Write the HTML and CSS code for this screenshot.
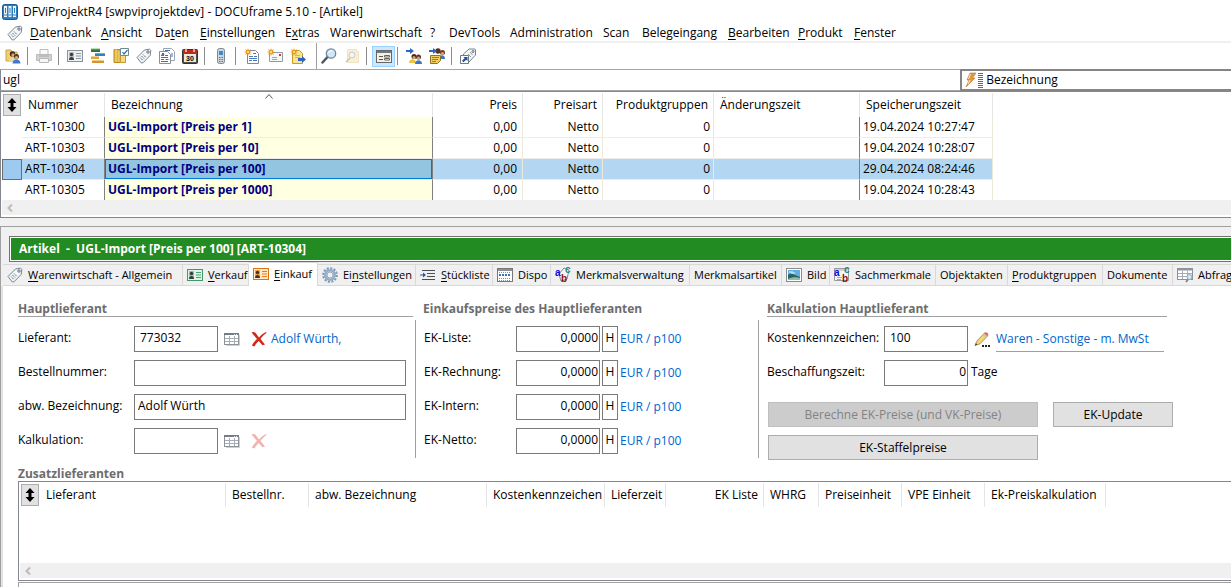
FILE: index.html
```html
<!DOCTYPE html>
<html lang="de">
<head>
    <meta charset="UTF-8">
    <meta name="viewport" content="width=device-width, initial-scale=1.0">
    <title>DFViProjektR4 [swpviprojektdev] - DOCUframe 5.10 - [Artikel]</title>
    <link rel="stylesheet" href="styles.css">
</head>
<body>
    <!-- Icons -->
    <svg class="sprite" width="0" height="0" aria-hidden="true">
        <symbol id="i-app" viewBox="0 0 16 16">
            <rect x=".5" y=".5" width="15" height="15" rx="2" fill="#2f7fc0" stroke="#1a5c97"/>
            <path d="M2 2h3v11H2zM6.500 2h3v11h-3zM11 2h3v11h-3z" fill="#eaf5fd"/>
            <path d="M3 4h1v5H3zM7.500 4h1v5h-1zM12 4h1v5h-1z" fill="#2f7fc0"/>
            <path d="M2 11h3M6.500 11h3M11 11h3" stroke="#2f7fc0"/>
        </symbol>
        <symbol id="i-tag" viewBox="0 0 16 16">
            <path d="M1 9.500 8.500 2l5-.8 1.300 1.200-.6 5L7 14.800 5.300 15z" fill="#f3f6f8" stroke="#738491" stroke-linejoin="round"/>
            <circle cx="12" cy="4" r="1.200" fill="#fff" stroke="#667"/>
            <path d="m4 9.500 3 3M5.500 8l3 3M7 6.500l3 3" stroke="#596873" stroke-dasharray="1.500 .7"/>
        </symbol>
        <symbol id="i-users" viewBox="0 0 16 16">
            <path d="M1 2h5l1 2h5v9H1z" fill="#efcf72" stroke="#cda23c"/>
            <circle cx="7.500" cy="6" r="2.700" fill="#3d2a1c"/><circle cx="8" cy="7" r="1.700" fill="#dda373"/>
            <path d="M4 13c0-5 7-5 7 0z" fill="#e7d7a3"/>
            <circle cx="11.500" cy="8.500" r="2.500" fill="#5b3420"/><circle cx="11.500" cy="9.500" r="1.600" fill="#e4ac80"/>
            <path d="M7.500 15.500c0-5.500 8-5.500 8 0z" fill="#3e79c9"/>
        </symbol>
        <symbol id="i-print" viewBox="0 0 16 16">
            <path d="M4 6V1.500h8V6" fill="#fafafa" stroke="#bdbdbd"/>
            <path d="M.5 6.500h15v6H.5z" fill="#d2d2d2" stroke="#bcbcbc"/>
            <path d="M3.500 10.500h9v4h-9z" fill="#f7f7f7" stroke="#b8b8b8"/><path d="M3 8h10" stroke="#a8a8a8"/>
        </symbol>
        <symbol id="i-card" viewBox="0 0 16 16">
            <rect x=".5" y="2.500" width="15" height="11" fill="#eef1f3" stroke="#87929b"/>
            <rect x="2" y="4" width="5" height="8" fill="#b9c0c5"/>
            <circle cx="4.500" cy="6.500" r="1.700" fill="#3c3c3c"/><path d="M2 12c0-4 5-4 5 0z" fill="#3c3c3c"/>
            <path d="M9 5.500h5M9 8h5M9 10.500h5" stroke="#8c969e"/>
        </symbol>
        <symbol id="i-bars" viewBox="0 0 16 16">
            <path d="M1 1h9v3H1z" fill="#35753b"/><path d="M5 5.500h10v2.500H5z" fill="#397fc6"/>
            <path d="M1 8.500h8V11H1z" fill="#e0a734"/><path d="M2 12.500h12V15H2z" fill="#d6942e"/>
            <path d="M1 1h9M5 5.500h10" stroke="#7fb873"/>
        </symbol>
        <symbol id="i-door" viewBox="0 0 16 16">
            <path d="M1 1.500h6v13H1z" fill="#e1b43c" stroke="#b88c20"/><path d="M3 1v13M6 3v11" stroke="#f7dc86"/>
            <path d="M7.500 6h5v8.500h-5z" fill="#f5da83" stroke="#c6982b"/>
            <path d="M7.500.5h8v7h-8z" fill="#fff" stroke="#72879a"/><path d="m9.500 4 1.500 2L14.500 2" fill="none" stroke="#28799b" stroke-width="1.200"/>
        </symbol>
        <symbol id="i-docs" viewBox="0 0 16 16">
            <path d="M4.500.5h8l3 3v9h-11z" fill="#fff" stroke="#9aa3ad"/>
            <path d="M.5 3.500h8l3 3v9H.5z" fill="#fff" stroke="#8791a0"/>
            <path d="M2 7.500h3M6 7.500h3M2 9.500h7M2 11.500h3M6.500 11.500h3M2 13.500h7M6 2.500h5M12 6h2M12 8h2" stroke="#4470b4"/>
            <path d="m3 7 1-2 1 2" fill="none" stroke="#263d82"/>
        </symbol>
        <symbol id="i-phone" viewBox="0 0 16 16">
            <rect x="4.500" y=".5" width="7" height="15" rx="2" fill="#cdd6de" stroke="#7d8b98"/>
            <path d="M6 3h4v4H6z" fill="#3f8ac9"/><path d="M6 9.500h4M6 11.500h4M6 13.500h4" stroke="#687681" stroke-dasharray="1 .5"/>
        </symbol>
        <symbol id="i-star" viewBox="0 0 8 8">
            <path d="m4 0 .8 2.200L7 1 5.800 3.200 8 4l-2.200.8L7 7l-2.200-1.200L4 8l-.8-2.200L1 7l1.200-2.200L0 4l2.200-.8L1 1l2.200 1.200z" fill="#e99a18"/>
            <circle cx="4" cy="4" r="1" fill="#fff0a0"/>
        </symbol>
        <symbol id="i-newdoc" viewBox="0 0 16 16">
            <path d="M3.500 2.500h8l3 3v10h-11z" fill="#fff" stroke="#7f8a96"/>
            <path d="M9 5.500h3M5 8.500h4M10 8.500h3M5 10.500h8M5 12.500h3M9 12.500h4" stroke="#4a78bb"/>
            <use href="#i-star" width="8" height="8"/>
        </symbol>
        <symbol id="i-newmail" viewBox="0 0 16 16">
            <path d="M2.500 4.500h13v9h-13z" fill="#f5f6f7" stroke="#919ba3"/>
            <path d="M12 6h2v2h-2z" fill="#ce3c2c"/><path d="M5 9.500h5M5 11.500h5" stroke="#9aa"/>
            <use href="#i-star" width="8" height="8"/>
        </symbol>
        <symbol id="i-newout" viewBox="0 0 16 16">
            <path d="M2.500 2.500h7l3 3v10h-10z" fill="#f9e58c" stroke="#c79b2b"/>
            <path d="M5 7.500h5M5 9.500h5" stroke="#d8b64d"/>
            <path d="M8 10h4V8l4 3.500-4 3.500v-2H8z" fill="#2b64c4"/>
            <use href="#i-star" width="8" height="8"/>
        </symbol>
        <symbol id="i-mag" viewBox="0 0 16 16">
            <path d="m1.500 14.500 5-5.500" stroke="#4d545b" stroke-width="2.500" stroke-linecap="round"/>
            <circle cx="10" cy="5.500" r="4.700" fill="#cfe7f8" stroke="#6e879c" stroke-width="1.300"/>
            <path d="M7.500 5C8 3 10 2.500 11.500 3" stroke="#fff" fill="none"/>
        </symbol>
        <symbol id="i-magdoc" viewBox="0 0 16 16">
            <g opacity=".45">
                <path d="M3.500 1.500h9v2h2v11h-11z" fill="#f6df9b" stroke="#dcc080"/>
                <path d="m2 14 4-4" stroke="#777" stroke-width="1.500"/><circle cx="8" cy="7" r="3" fill="#e5edf3" stroke="#888"/>
            </g>
        </symbol>
        <symbol id="i-form" viewBox="0 0 16 16">
            <rect x=".5" y="2.500" width="15" height="12" fill="#f4f1e4" stroke="#65676b"/>
            <path d="M1 4h14" stroke="#74777b" stroke-width="2"/>
            <path d="M3 8.500h4M3 11.500h4" stroke="#555"/><path d="M8.500 7.500h5v1.500h-5zM8.500 10.500h5V12h-5z" fill="#fff" stroke="#666"/>
        </symbol>
        <symbol id="i-arrusers" viewBox="0 0 16 16">
            <path d="M0 2h4V0l4 3-4 3V4H0z" fill="#2b67c5"/>
            <circle cx="8" cy="8.500" r="2.500" fill="#47291a"/><circle cx="8" cy="9.500" r="1.500" fill="#dca27a"/>
            <path d="M3 15c0-5 7-5 7 0z" fill="#edc43f"/>
            <circle cx="12.500" cy="9" r="2.500" fill="#603523"/><circle cx="12.500" cy="10" r="1.500" fill="#dda27a"/>
            <path d="M9 16c0-5 7-5 7 0z" fill="#3c75c6"/>
        </symbol>
        <symbol id="i-arrnote" viewBox="0 0 16 16">
            <circle cx="9" cy="3" r="2.700" fill="#5b321e"/><circle cx="13.500" cy="4.500" r="2.500" fill="#6b3d23"/>
            <circle cx="13.500" cy="5.500" r="1.500" fill="#dfa57d"/><path d="M10.500 11c0-5 5.500-5 5.500 0z" fill="#3c75c6"/>
            <path d="M0 2h4V0l4 3-4 3V4H0z" fill="#2b67c5"/>
            <path d="M1.500 7.500h10v5l-3 3h-7z" fill="#f0cf61" stroke="#8f7427"/><path d="M3 9.500h7M3 11.500h6M3 13.500h4" stroke="#9a8132"/>
        </symbol>
        <symbol id="i-taglink" viewBox="0 0 16 16">
            <path d="m3.500 6 5.500-5h6l.5.500v5.500L9 14 3.500 8.500z" fill="#f4f7f9" stroke="#738491"/>
            <circle cx="13" cy="3.500" r="1" fill="#fff" stroke="#667"/><path d="m8 6 3 3M10 4l2.500 3" stroke="#8b98a2"/>
            <path d="M.5 7.500h8v8h-8z" fill="#fff" stroke="#777"/>
            <path d="M3.500 9h4v4L6.200 11.700 3.500 14.300 2 12.800 4.700 10.200z" fill="#17539e"/>
        </symbol>
        <symbol id="i-flash" viewBox="0 0 18 16">
            <path d="M5 1h6L7.500 6H10L1 15l3-7H2z" fill="#e59637" stroke="#b9763f" stroke-width=".6"/>
            <path d="m5.500 2-2 5M5 8l-2 4" stroke="#fff0be"/>
            <path d="M13 1.500h5M13 3.500h5M13 5.500h5M13 7.500h5M13 9.500h5M13 11.500h5M13 13.500h5M13 15.500h5" stroke="#666"/>
        </symbol>
        <symbol id="i-updown" viewBox="0 0 10 14">
            <path d="m5 0 4.500 5H6.500v4h3L5 14 .5 9h3V5h-3z"/>
        </symbol>
        <symbol id="i-cardgreen" viewBox="0 0 16 16">
            <rect x=".5" y="2.500" width="15" height="11" fill="#dff4e8" stroke="#3e9a69"/>
            <rect x="2" y="4" width="5" height="8" fill="#8ccca8"/>
            <circle cx="4.500" cy="6.500" r="1.700" fill="#3c3c3c"/><path d="M2 12c0-4 5-4 5 0z" fill="#3c3c3c"/>
            <path d="M9 5.500h5M9 8h5M9 10.500h5" stroke="#46a574"/>
        </symbol>
        <symbol id="i-cardorange" viewBox="0 0 16 16">
            <rect x=".5" y="2.500" width="15" height="11" fill="#ffe9c9" stroke="#dc7417"/>
            <rect x="2" y="4" width="5" height="8" fill="#f7a54a"/>
            <circle cx="4.500" cy="6.500" r="1.700" fill="#443225"/><path d="M2 12c0-4 5-4 5 0z" fill="#443225"/>
            <path d="M9 5.500h5M9 8h5M9 10.500h5" stroke="#e57c1c"/>
        </symbol>
        <symbol id="i-gear" viewBox="0 0 16 16">
            <circle cx="8" cy="8" r="6.800" fill="none" stroke="#7c97b4" stroke-width="2" stroke-dasharray="2.100 1.460"/>
            <circle cx="8" cy="8" r="4.700" fill="#f5f8fb" stroke="#93abc5" stroke-width="2.600"/>
            <circle cx="8" cy="8" r="3" fill="#f0f0f0" stroke="#718cab" stroke-width=".7"/>
        </symbol>
        <symbol id="i-list" viewBox="0 0 16 16">
            <path d="M2 3.500h13M7 6.500h8M7 9.500h8M2 12.500h13" stroke="#4b4f54"/>
            <path d="M0 7.500h3V5.500L6 8l-3 2.500V8.500H0z" fill="#2456a8"/>
        </symbol>
        <symbol id="i-dispo" viewBox="0 0 16 16">
            <rect x=".5" y="1.500" width="15" height="13" fill="#fff" stroke="#777"/>
            <path d="M1 3h14" stroke="#8a8f96" stroke-width="2"/>
            <path d="M2 5.500h12M2 11.500h12M2 13.500h12" stroke="#8a9199" stroke-dasharray="1 1"/>
            <path d="M2 8h12" stroke="#3773b9" stroke-width="2" stroke-dasharray="2 1"/>
        </symbol>
        <symbol id="i-img" viewBox="0 0 16 16">
            <rect x=".5" y="1.500" width="15" height="13" fill="#fff" stroke="#8b8b8b"/>
            <path d="M2 3h12v10H2z" fill="#62aee0"/><path d="M2 8c2-2 5-1 7 0l5 2v3H2z" fill="#276568"/>
            <path d="M3 5h4M5 6h4" stroke="#e8f5ff"/><path d="M2 12c4-2 8-2 12-1v2H2z" fill="#8fbf9b"/>
        </symbol>
        <symbol id="i-grid" viewBox="0 0 16 16">
            <rect x=".5" y="2.500" width="14" height="11" fill="#fff" stroke="#8b929a"/>
            <path d="M0 3h15" stroke="#737b85" stroke-width="2"/><path d="M10 3.500h4" stroke="#dde3ea" stroke-dasharray="1 1"/>
            <path d="M1 7.500h13M1 10.500h13M5.500 5v8M10.500 5v8" stroke="#a6adb4"/><path d="M2 14.500h13.500V4" fill="none" stroke="#ccd0d4"/>
        </symbol>
        <symbol id="i-query" viewBox="0 0 16 16">
            <rect x=".5" y="1.500" width="15" height="11" fill="#fff" stroke="#8b929a"/>
            <path d="M1 2.500h14" stroke="#8c949c" stroke-width="2"/>
            <path d="M1 6.500h14M1 9.500h14M5.500 4v8M10.500 4v8" stroke="#a6adb4"/>
            <path d="m9 15 2-2.500" stroke="#777" stroke-width="1.500"/><circle cx="12.500" cy="10" r="2.500" fill="#d3e8f6" stroke="#8fa9bc"/>
        </symbol>
        <symbol id="i-del" viewBox="0 0 16 16">
            <path d="M.5 1.500C2 .5 4 .8 5 2.500l3 4c2-2.500 4.500-4.500 7-5.500l.5 1C13 3.500 11 5.500 9.500 8l4.500 5.500-2.500.7L7.700 10C6 11.500 4.500 13.500 3.500 15.500L.8 14.500C2.200 12 4 9.800 6 8z" fill="#d02a17"/>
        </symbol>
        <symbol id="i-pencil" viewBox="0 0 16 16">
            <path d="M1 14.500 3 10l7.500-8L14 4.500 6 12.800z" fill="#f4d779" stroke="#9c7a3b" stroke-width=".8"/>
            <path d="m10 2.500 1.300-1.200c1-.6 3.500 1 2.900 2.200L13 5z" fill="#db6a75"/><path d="M9 3.500 12.300 6" stroke="#b9c7c5" stroke-width="1.300"/>
            <path d="m1 14.500.9-2.200L3.300 13.500z" fill="#333"/>
            <path d="M8 14h2v2H8zM11 14h2v2h-2zM14 14h2v2h-2z" fill="#222"/>
        </symbol>
    </svg>

    <header class="titlebar">
        <svg class="icon"><use href="#i-app"/></svg>
        <span>DFViProjektR4 [swpviprojektdev] - DOCUframe 5.10 - [Artikel]</span>
    </header>

    <nav class="menu">
        <svg class="icon"><use href="#i-tag"/></svg>
        <button><u>D</u>atenbank</button>
        <button><u>A</u>nsicht</button>
        <button>Da<u>t</u>en</button>
        <button><u>E</u>instellungen</button>
        <button>E<u>x</u>tras</button>
        <button>Warenwirtschaft</button>
        <button>?</button>
        <button>DevTools</button>
        <button>Administration</button>
        <button>Scan</button>
        <button>Belegeingang</button>
        <button><u>B</u>earbeiten</button>
        <button><u>P</u>rodukt</button>
        <button><u>F</u>enster</button>
    </nav>

    <div class="toolbar">
        <button aria-label="Benutzer"><svg class="icon"><use href="#i-users"/></svg></button>
        <i class="sep"></i>
        <button aria-label="Drucken" disabled><svg class="icon"><use href="#i-print"/></svg></button>
        <i class="sep"></i>
        <button aria-label="Adressen"><svg class="icon"><use href="#i-card"/></svg></button>
        <button aria-label="Projekte"><svg class="icon"><use href="#i-bars"/></svg></button>
        <button aria-label="Aufgaben"><svg class="icon"><use href="#i-door"/></svg></button>
        <button aria-label="Artikel"><svg class="icon"><use href="#i-tag"/></svg></button>
        <button aria-label="Dokumente"><svg class="icon"><use href="#i-docs"/></svg></button>
        <button aria-label="Kalender">
            <svg class="icon" viewBox="0 0 16 16">
                <rect x=".5" y="1.500" width="15" height="14" rx="1" fill="#50504b" stroke="#38312c"/>
                <path d="M1 2h14v4H1z" fill="#b92d20"/><path d="M4 0v4M12 0v4" stroke="#f1d6ca" stroke-width="1.500"/>
                <path d="M2 6h12v8H2z" fill="#eee8d6"/>
                <text x="8" y="13" text-anchor="middle" class="ic-num">30</text>
            </svg>
        </button>
        <i class="sep"></i>
        <button aria-label="Telefon"><svg class="icon"><use href="#i-phone"/></svg></button>
        <i class="sep"></i>
        <button aria-label="Neues Dokument"><svg class="icon"><use href="#i-newdoc"/></svg></button>
        <button aria-label="Neue Nachricht"><svg class="icon"><use href="#i-newmail"/></svg></button>
        <button aria-label="Neue Notiz"><svg class="icon"><use href="#i-newout"/></svg></button>
        <i class="sep sep-full"></i>
        <button aria-label="Suchen"><svg class="icon"><use href="#i-mag"/></svg></button>
        <button aria-label="Im Dokument suchen" disabled><svg class="icon"><use href="#i-magdoc"/></svg></button>
        <i class="sep"></i>
        <button aria-label="Formular" class="pressed"><svg class="icon"><use href="#i-form"/></svg></button>
        <i class="sep"></i>
        <button aria-label="Zuweisen"><svg class="icon"><use href="#i-arrusers"/></svg></button>
        <button aria-label="Notiz zuweisen"><svg class="icon"><use href="#i-arrnote"/></svg></button>
        <i class="sep"></i>
        <button aria-label="Artikel verknüpfen"><svg class="icon"><use href="#i-taglink"/></svg></button>
    </div>

    <div class="search">
        <input type="text" value="ugl" aria-label="Suche">
        <button><svg class="flash"><use href="#i-flash"/></svg>Bezeichnung</button>
    </div>

    <!-- Artikelliste -->
    <div class="listbox">
        <table class="list articles">
            <colgroup>
                <col class="w-sel"><col class="w-nr"><col class="w-bez"><col class="w-preis">
                <col class="w-art"><col class="w-grp"><col class="w-aend"><col class="w-spei">
            </colgroup>
            <thead>
                <tr>
                    <th><button class="updown" aria-label="Sortieren"><svg><use href="#i-updown"/></svg></button></th>
                    <th>Nummer</th>
                    <th class="sorted">Bezeichnung<svg class="caret" viewBox="0 0 8 5"><path d="m.5 4.500 3.500-4 3.500 4" fill="none" stroke="#555"/></svg></th>
                    <th class="r">Preis</th>
                    <th class="r">Preisart</th>
                    <th class="r">Produktgruppen</th>
                    <th>Änderungszeit</th>
                    <th>Speicherungszeit</th>
                </tr>
            </thead>
            <tbody>
                <tr><td></td><td>ART-10300</td><td>UGL-Import [Preis per 1]</td><td>0,00</td><td>Netto</td><td>0</td><td></td><td>19.04.2024 10:27:47</td></tr>
                <tr><td></td><td>ART-10303</td><td>UGL-Import [Preis per 10]</td><td>0,00</td><td>Netto</td><td>0</td><td></td><td>19.04.2024 10:28:07</td></tr>
                <tr class="active"><td></td><td>ART-10304</td><td>UGL-Import [Preis per 100]</td><td>0,00</td><td>Netto</td><td>0</td><td></td><td>29.04.2024 08:24:46</td></tr>
                <tr><td></td><td>ART-10305</td><td>UGL-Import [Preis per 1000]</td><td>0,00</td><td>Netto</td><td>0</td><td></td><td>19.04.2024 10:28:43</td></tr>
            </tbody>
        </table>
        <div class="hscroll"><svg viewBox="0 0 6 8"><path d="M5 .5 1.500 4 5 7.500" fill="none" stroke="#bbb" stroke-width="2"/></svg></div>
    </div>

    <!-- Detailansicht -->
    <main class="detail">
        <h1>Artikel &nbsp;- &nbsp;UGL-Import [Preis per 100] [ART-10304]</h1>

        <div class="tabs" role="tablist">
            <button role="tab"><svg class="icon"><use href="#i-tag"/></svg><span><u>W</u>arenwirtschaft - Allgemein</span></button>
            <button role="tab"><svg class="icon"><use href="#i-cardgreen"/></svg><span><u>V</u>erkauf</span></button>
            <button role="tab" class="on" aria-selected="true"><svg class="icon"><use href="#i-cardorange"/></svg><span><u>E</u>inkauf</span></button>
            <button role="tab"><svg class="icon"><use href="#i-gear"/></svg><span>Ei<u>n</u>stellungen</span></button>
            <button role="tab"><svg class="icon"><use href="#i-list"/></svg><span><u>S</u>tückliste</span></button>
            <button role="tab"><svg class="icon"><use href="#i-dispo"/></svg><span>Dispo</span></button>
            <button role="tab">
                <svg class="icon" viewBox="0 0 16 16">
                    <path d="m4 7 5-6 5 2-2 9-6 2z" fill="#f5f5f5" stroke="#888"/>
                    <text x="0" y="9" class="ic-abc ic-a">a</text>
                    <text x="6" y="15" class="ic-abc ic-b">b</text>
                    <text x="10" y="6" class="ic-abc ic-c">c</text>
                </svg>
                <span>Merkmalsverwaltung</span>
            </button>
            <button role="tab"><span>Merkmalsartikel</span></button>
            <button role="tab"><svg class="icon"><use href="#i-img"/></svg><span>Bild</span></button>
            <button role="tab">
                <svg class="icon" viewBox="0 0 16 16">
                    <path d="M.5 1.500h14v12H.5z" fill="#f5f5f5" stroke="#999"/><path d="M1 3h13M3 10.500h5M3 12.500h4" stroke="#aaa"/>
                    <text x="0" y="9" class="ic-abc ic-a">a</text>
                    <text x="8" y="15" class="ic-abc ic-b">b</text>
                    <text x="10" y="6" class="ic-abc ic-c">c</text>
                </svg>
                <span>Sachmerkmale</span>
            </button>
            <button role="tab"><span>Objektakten</span></button>
            <button role="tab"><span><u>P</u>roduktgruppen</span></button>
            <button role="tab"><span>Dokumente</span></button>
            <button role="tab"><svg class="icon"><use href="#i-query"/></svg><span>Abfragen</span></button>
        </div>

        <div class="page">
            <div class="groups">
                <section class="group supplier">
                    <h2 class="lined">Hauptlieferant</h2>
                    <div class="rows">
                        <div class="row">
                            <label for="lieferant">Lieferant:</label>
                            <input id="lieferant" class="short code" type="text" value="773032">
                            <button class="pick" aria-label="Lieferant wählen"><svg class="icon"><use href="#i-grid"/></svg></button>
                            <button class="del" aria-label="Lieferant entfernen"><svg class="icon"><use href="#i-del"/></svg></button>
                            <a href="#">Adolf Würth,</a>
                        </div>
                        <div class="row">
                            <label for="bestellnr">Bestellnummer:</label>
                            <input id="bestellnr" class="long" type="text">
                        </div>
                        <div class="row">
                            <label for="abwbez">abw. Bezeichnung:</label>
                            <input id="abwbez" class="long" type="text" value="Adolf Würth">
                        </div>
                        <div class="row">
                            <label for="kalk">Kalkulation:</label>
                            <input id="kalk" class="short" type="text">
                            <button class="pick" aria-label="Kalkulation wählen"><svg class="icon"><use href="#i-grid"/></svg></button>
                            <button class="del" aria-label="Kalkulation entfernen" disabled><svg class="icon"><use href="#i-del"/></svg></button>
                        </div>
                    </div>
                </section>

                <section class="group prices">
                    <h2>Einkaufspreise des Hauptlieferanten</h2>
                    <div class="rows">
                        <div class="row">
                            <label for="ekliste">EK-Liste:</label>
                            <input id="ekliste" class="short num" type="text" value="0,0000">
                            <button class="hist">H</button>
                            <a href="#">EUR / p100</a>
                        </div>
                        <div class="row">
                            <label for="ekrech">EK-Rechnung:</label>
                            <input id="ekrech" class="short num" type="text" value="0,0000">
                            <button class="hist">H</button>
                            <a href="#">EUR / p100</a>
                        </div>
                        <div class="row">
                            <label for="ekintern">EK-Intern:</label>
                            <input id="ekintern" class="short num" type="text" value="0,0000">
                            <button class="hist">H</button>
                            <a href="#">EUR / p100</a>
                        </div>
                        <div class="row">
                            <label for="eknetto">EK-Netto:</label>
                            <input id="eknetto" class="short num" type="text" value="0,0000">
                            <button class="hist">H</button>
                            <a href="#">EUR / p100</a>
                        </div>
                    </div>
                </section>

                <section class="group calc">
                    <h2 class="lined">Kalkulation Hauptlieferant</h2>
                    <div class="rows">
                        <div class="row">
                            <label for="kostenkz">Kostenkennzeichen:</label>
                            <input id="kostenkz" class="short code" type="text" value="100">
                            <button class="pick" aria-label="Bearbeiten"><svg class="icon"><use href="#i-pencil"/></svg></button>
                            <a href="#" class="ruled">Waren - Sonstige - m. MwSt</a>
                        </div>
                        <div class="row">
                            <label for="bzeit">Beschaffungszeit:</label>
                            <input id="bzeit" class="short num" type="text" value="0">
                            <span class="unit">Tage</span>
                        </div>
                        <div class="actions">
                            <button disabled>Berechne EK-Preise (und VK-Preise)</button>
                            <button>EK-Update</button>
                            <button>EK-Staffelpreise</button>
                        </div>
                    </div>
                </section>
            </div>

            <h2 class="extra">Zusatzlieferanten</h2>
            <div class="listbox suppliers">
                <table class="list">
                    <colgroup>
                        <col class="w-sel"><col class="w-lief"><col class="w-best"><col class="w-abw"><col class="w-kost">
                        <col class="w-zeit"><col class="w-ekl"><col class="w-whrg"><col class="w-pe"><col class="w-vpe"><col class="w-calc">
                    </colgroup>
                    <thead>
                        <tr>
                            <th><button class="updown" aria-label="Sortieren"><svg><use href="#i-updown"/></svg></button></th>
                            <th>Lieferant</th>
                            <th>Bestellnr.</th>
                            <th>abw. Bezeichnung</th>
                            <th>Kostenkennzeichen</th>
                            <th>Lieferzeit</th>
                            <th class="r">EK Liste</th>
                            <th>WHRG</th>
                            <th>Preiseinheit</th>
                            <th>VPE Einheit</th>
                            <th>Ek-Preiskalkulation</th>
                        </tr>
                    </thead>
                </table>
                <div class="hscroll"><svg viewBox="0 0 6 8"><path d="M5 .5 1.500 4 5 7.500" fill="none" stroke="#bbb" stroke-width="2"/></svg></div>
            </div>
            <div class="below"></div>
        </div>
    </main>
</body>
</html>
```
FILE: styles.css
```css
* {
    box-sizing: border-box;
    margin: 0;
    padding: 0;
}
html, body {
    height: 100%;
}
body {
    display: flex;
    flex-direction: column;
    overflow: hidden;
    background: #f0f0f0;
    color: #000;
    font: 12px/16px "Open Sans", "Noto Sans", sans-serif;
    white-space: nowrap;
}
button, input {
    font: inherit;
    color: inherit;
    background: none;
    border: 0;
    border-radius: 0;
}
a {
    color: #0066cc;
    text-decoration: none;
}
u {
    text-underline-offset: 2px;
}
.sprite {
    position: absolute;
}
.icon {
    display: block;
    flex: none;
    width: 16px;
    height: 16px;
}
.ic-num {
    font: bold 7px "Liberation Sans", sans-serif;
}
.ic-abc {
    font: bold 10px "Liberation Sans", sans-serif;
}
.ic-a { fill: #0a0ae0; }
.ic-b { fill: #8c0c14; }
.ic-c { fill: #128c8c; }

/* Fensterkopf */
.titlebar {
    flex: none;
    display: flex;
    align-items: center;
    gap: 5px;
    height: 23px;
    padding-left: 2px;
    background: #fff;
}
.menu {
    flex: none;
    display: grid;
    grid-template-columns: 23px 71px 54px 45px 85px 45px 100px 19px 61px 93px 39px 86px 70px 56px 60px;
    align-items: center;
    height: 20px;
    padding: 2px 7px 0;
    background: #fff;
    border-bottom: 2px solid #f0f0f0;
}
.menu button {
    text-align: left;
}
.toolbar {
    flex: none;
    display: flex;
    align-items: center;
    height: 26px;
    padding-left: 2px;
    background: #fff;
}
.toolbar button {
    display: flex;
    align-items: center;
    width: 23px;
    height: 21px;
    padding-left: 3px;
}
.toolbar .pressed {
    background: #cce8ff;
    border: 1px solid #99d1ff;
}
.sep {
    width: 1px;
    height: 18px;
    margin: 0 5px 0 2px;
    background: #8c8c8c;
}
.sep-full {
    height: 100%;
    margin: 0 1px 0 6px;
    background: #a0a0a0;
}

/* Suchzeile */
.search {
    flex: none;
    display: flex;
    height: 22px;
}
.search input {
    flex: 1;
    padding: 0 2px;
    background: #fff;
    border: 1px solid #a5a5aa;
    border-left-color: #828790;
    border-right: 0;
}
.search button {
    display: flex;
    align-items: center;
    gap: 3px;
    width: 22%;
    padding-left: 3px;
    background: #fff;
    border: 2px solid #858585;
    border-right: 0;
}
.flash {
    width: 18px;
    height: 16px;
}

/* Listen */
.listbox {
    flex: none;
    padding: 1px 0 2px 1px;
    background: #fff;
    border: 1px solid #828790;
    border-right: 0;
}
.list {
    width: 0;
    table-layout: fixed;
    border-spacing: 0;
}
.w-sel { width: 20px; }
.w-nr { width: 83px; }
.w-bez { width: 328px; }
.w-preis { width: 90px; }
.w-art { width: 80px; }
.w-grp { width: 111px; }
.w-aend { width: 146px; }
.w-spei { width: 133px; }
.w-lief { width: 186px; }
.w-best { width: 83px; }
.w-abw { width: 178px; }
.w-kost { width: 118px; }
.w-zeit { width: 61px; }
.w-ekl { width: 98px; }
.w-whrg { width: 55px; }
.w-pe { width: 83px; }
.w-vpe { width: 83px; }
.w-calc { width: 121px; }
.list th {
    height: 24px;
    padding: 0 5px 0 6px;
    border-right: 1px solid #e5e5e5;
    font-weight: normal;
    text-align: left;
}
.list th:first-child {
    padding: 0;
    border: 0;
}
.list .r {
    text-align: right;
}
.updown {
    display: flex;
    align-items: center;
    justify-content: center;
    width: 18px;
    height: 22px;
    margin-left: 1px;
    background: #e1e1e1;
    border: 1px solid #adadad;
}
.updown svg {
    width: 10px;
    height: 14px;
}
.sorted {
    position: relative;
}
.caret {
    position: absolute;
    top: 1px;
    left: calc(50% - 4px);
    width: 8px;
    height: 5px;
}
.articles td {
    height: 21px;
    padding: 0 3px;
    border-right: 1px solid #ece9d8;
    border-bottom: 1px solid #ececec;
}
.articles tr:last-child td {
    height: 20px;
    border-bottom: 0;
}
.articles td:first-child {
    border: 0;
}
.articles td:nth-child(2), .articles td:nth-child(3), .articles td:nth-child(7) {
    border-right-color: #808080;
}
.articles td:nth-child(3) {
    background: #ffffe1;
    color: #000080;
    font-weight: bold;
}
.articles td:nth-child(4), .articles td:nth-child(5), .articles td:nth-child(6) {
    text-align: right;
}
.articles td:nth-child(4) {
    padding-right: 5px;
}
.articles .active td {
    background: #b3d7f3;
}
.articles .active td:first-child {
    background: #9fcaf0;
    border: 1px solid #6d6d6d;
}
.articles .active td:nth-child(3) {
    background: #93c4e0;
    box-shadow: inset 0 0 0 1px #0078d7;
}
.hscroll {
    display: flex;
    align-items: center;
    height: 15px;
    padding-left: 5px;
    background: #f0f0f0;
}
.hscroll svg {
    width: 6px;
    height: 8px;
}

/* Detail */
.detail {
    flex: 1;
    display: flex;
    flex-direction: column;
    min-height: 0;
    margin-top: 8px;
    border-top: 1px solid #a0a0a0;
    border-left: 1px solid #a0a0a0;
}
.detail h1 {
    margin: 9px 0 0 8px;
    padding-left: 9px;
    background: #228b22;
    border: 1px solid #707070;
    border-right: 0;
    box-shadow: inset 1px 1px #fff, inset 0 -1px #fff;
    color: #fff;
    font-size: 12px;
    line-height: 24px;
}
.tabs {
    flex: none;
    display: grid;
    grid-template-columns: 180px 66px 69px 98px 77px 58px 139px 92px 48px 106px 72px 95px 70px 80px;
    height: 24px;
    margin-left: 2px;
    padding-top: 2px;
    overflow: hidden;
    font-size: 11px;
}
.tabs button {
    display: flex;
    align-items: center;
    gap: 5px;
    padding: 0 0 0 4px;
    border: 1px solid #d9d9d9;
    border-left: 0;
}
.tabs .on {
    margin-top: -2px;
    padding-bottom: 2px;
    background: #fff;
    border-bottom: 0;
}
.page {
    flex: 1;
    display: flex;
    flex-direction: column;
    min-height: 0;
    padding: 15px 0 0 15px;
    background: #fff;
    border-left: 2px solid #e3e3e3;
}
.page h2 {
    color: #6d6d6d;
    font-size: 12px;
    line-height: 15px;
}
.groups {
    display: flex;
}
.group {
    flex: none;
}
.group .lined {
    border-bottom: 1px solid #a0a0a0;
}
.supplier { width: 395px; }
.prices { width: 344px; margin-left: 2px; }
.calc { width: 406px; margin-left: 8px; }
.prices h2 {
    padding-left: 8px;
    border-bottom: 1px solid transparent;
}
.calc .lined {
    margin-right: 6px;
}
.rows {
    display: flex;
    flex-direction: column;
    gap: 8px;
    margin-top: 3px;
    padding: 6px 0 4px;
}
.prices .rows {
    padding-left: 8px;
    border-left: 1px solid #a0a0a0;
    border-right: 1px solid #a0a0a0;
}
.calc .rows {
    padding-bottom: 0;
}
.row {
    display: flex;
    align-items: center;
    height: 26px;
}
.supplier label { width: 116px; }
.prices label { width: 92px; }
.calc label { width: 117px; }
.row label {
    margin-top: -2px;
}
.row input {
    height: 26px;
    padding: 0 3px 4px;
    border: 1px solid #7a7a7a;
}
.row .short {
    width: 84px;
}
.row .long {
    width: 272px;
}
.row .code {
    padding-left: 5px;
}
.row .num {
    padding-right: 1px;
    text-align: right;
}
.pick {
    margin: 0 6px;
}
.del {
    margin: 0 4px 0 5px;
}
.del:disabled {
    opacity: .35;
}
.hist {
    width: 16px;
    height: 26px;
    margin: 0 2px;
    padding-bottom: 2px;
    border: 1px solid #7a7a7a;
}
.ruled {
    width: 168px;
    line-height: 25px;
    border-bottom: 1px solid #a0a0a0;
}
.unit {
    margin: -2px 0 0 3px;
}
.actions {
    display: grid;
    grid-template-columns: 270px 120px;
    gap: 8px 15px;
    padding: 8px 0 0 1px;
}
.actions button {
    height: 25px;
    background: #e1e1e1;
    border: 1px solid #adadad;
}
.actions button:disabled {
    background: #ccc;
    border-color: #bfbfbf;
    color: #838383;
}
.page .extra {
    margin-top: 6px;
}
.suppliers {
    display: flex;
    flex-direction: column;
    height: 100px;
}
.suppliers .hscroll {
    margin-top: auto;
}
.below {
    flex: 1;
    margin-top: 1px;
    border: 1px solid #a0a0a0;
    border-width: 1px 0 0 1px;
}
```
